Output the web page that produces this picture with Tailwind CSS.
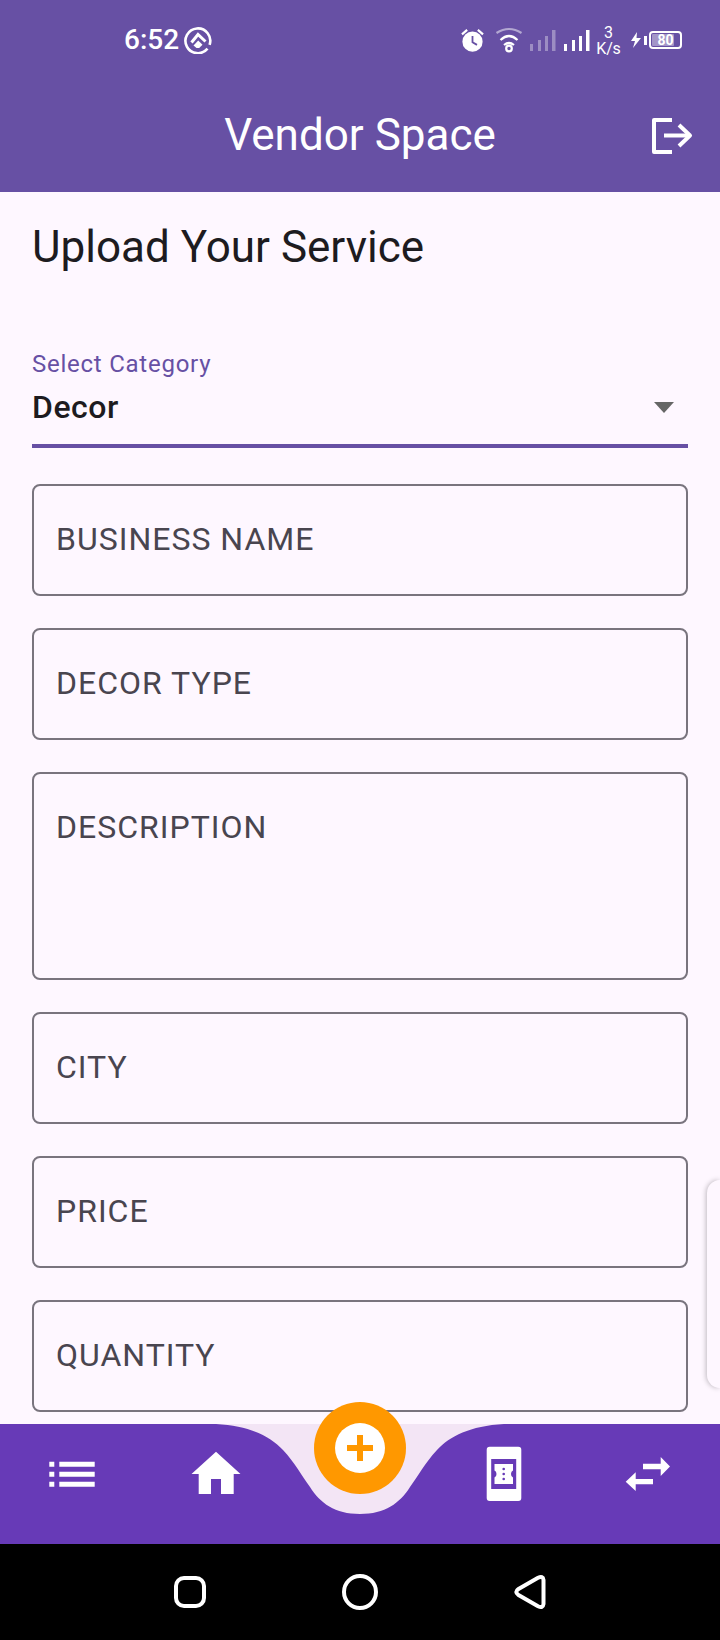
<!DOCTYPE html>
<html lang="en">
<head>
  <meta charset="UTF-8" />
  <title>Vendor Space</title>
  <meta name="viewport" content="width=device-width, initial-scale=1.0" />
  <script src="https://cdn.jsdelivr.net/npm/@tailwindcss/browser@4"></script>
</head>
<body class="font-[Roboto,sans-serif] bg-[#fef7ff]">
  <div class="w-[720px] h-[1640px] flex flex-col overflow-hidden">

    <!-- app bar with status bar -->
    <header class="h-[192px] bg-[#6750a4] text-white shrink-0">
      <div class="h-[80px] flex items-center justify-between pl-[124px] pr-[38px]">
        <div class="flex items-center">
          <span class="text-[28px] font-medium leading-none">6:52</span>
          <svg class="ml-[5px]" width="28" height="28" viewBox="0 0 28 28" fill="none" stroke="white">
            <path d="M23.5 22.6A12.4 12.4 0 1 1 25.6 18.8" stroke-width="2.6" />
            <path d="M7.5 16.5 14 8.5l7.5 7" stroke-width="3" />
            <path d="M9.5 19.5 14.2 14.5l4.3 4.2-3.3 3.3H12.5z" fill="white" stroke="none" />
          </svg>
        </div>
        <div class="flex items-center">
          <svg width="27" height="27" viewBox="0 0 24 24" fill="white">
            <path d="M22 5.72l-4.6-3.86-1.29 1.53 4.6 3.86L22 5.72zM7.88 3.39L6.6 1.86 2 5.71l1.29 1.53 4.59-3.85z" />
            <circle cx="12" cy="13" r="9" />
            <path d="M12 8v5.5l4 2.4" fill="none" stroke="#6750a4" stroke-width="1.6" />
          </svg>
          <svg class="ml-[9px]" width="28" height="28" viewBox="0 0 28 28" fill="none" stroke="white" stroke-width="2.2">
            <path d="M1.5 7Q14 -1 26.5 7" stroke-opacity="0.5" />
            <path d="M5.5 14Q14 6 22.5 14" />
            <path d="M9 19Q14 15 19 19" />
            <circle cx="14" cy="22.5" r="2.8" />
          </svg>
          <svg class="ml-[7px]" width="26" height="22" viewBox="0 0 26 22" fill="white" fill-opacity="0.35">
            <rect x="0" y="15" width="3" height="7" />
            <rect x="8" y="11" width="3" height="11" />
            <rect x="15" y="7" width="3" height="15" />
            <rect x="22" y="1" width="3.5" height="21" />
          </svg>
          <svg class="ml-[8px]" width="26" height="22" viewBox="0 0 26 22" fill="white">
            <rect x="0" y="15" width="3" height="7" />
            <rect x="8" y="11" width="3" height="11" />
            <rect x="15" y="7" width="3" height="15" />
            <rect x="22" y="1" width="3.5" height="21" />
          </svg>
          <div class="ml-[7px] w-[23px] flex flex-col items-center text-[16px] leading-[16px] mt-[2px]">
            <span>3</span>
            <span class="-tracking-[0.2px]">K/s</span>
          </div>
          <svg class="ml-[11px]" width="10" height="16" viewBox="0 0 10 16" fill="white">
            <path d="M6 0 0 9h4l-2 7 8-10H5.5z" />
          </svg>
          <div class="ml-[3px] w-[3px] h-[9px] bg-white"></div>
          <div class="ml-[2px] w-[33px] h-[18px] border-2 border-white rounded-[4px] p-[1px] relative">
            <div class="h-full w-[80%] bg-white/40 rounded-[1px]"></div>
            <span class="absolute inset-0 flex items-center justify-center text-[14px] font-bold leading-none">80</span>
          </div>
        </div>
      </div>
      <div class="grid grid-cols-[1fr_auto_1fr] items-center h-[112px]">
        <div></div>
        <h1 class="text-[44px] leading-none mb-[2px]">Vendor Space</h1>
        <div class="flex justify-end pr-[27px]">
          <svg width="41" height="36" viewBox="0 0 41 36" fill="none" stroke="white" stroke-width="4" stroke-linejoin="round">
            <path d="M20 2H2V34H20" />
            <path d="M12 17.5H38" />
            <path d="M27 7l11 10.5L27 28" />
          </svg>
        </div>
      </div>
    </header>

    <!-- form -->
    <main class="relative flex-1 overflow-hidden px-[32px] pt-[27px] text-[#1d1b20]">
      <h2 class="text-[44px] leading-[56px]">Upload Your Service</h2>

      <div class="mt-[73px] border-b-4 border-[#6750a4] pb-[17px]">
        <div class="text-[24px] leading-[32px] tracking-[0.75px] text-[#6750a4]">Select Category</div>
        <div class="flex items-center justify-between mt-[7px]">
          <span class="text-[32px] leading-[40px] font-medium tracking-[0.5px]">Decor</span>
          <svg class="mr-[14px]" width="20" height="11" viewBox="0 0 20 11" fill="#666666">
            <path d="M0 0h20L10 11z" />
          </svg>
        </div>
      </div>

      <div class="mt-[36px] flex flex-col gap-[32px]">
        <div class="h-[112px] border-2 border-[#79747e] rounded-[8px] px-[22px] pb-[2px] flex items-center text-[32px] tracking-[1px] text-[#49454f]">BUSINESS NAME</div>
        <div class="h-[112px] border-2 border-[#79747e] rounded-[8px] px-[22px] pb-[2px] flex items-center text-[32px] tracking-[1px] text-[#49454f]">DECOR TYPE</div>
        <div class="h-[208px] border-2 border-[#79747e] rounded-[8px] px-[22px] pt-[33px] text-[32px] leading-[40px] tracking-[1px] text-[#49454f]">DESCRIPTION</div>
        <div class="h-[112px] border-2 border-[#79747e] rounded-[8px] px-[22px] pb-[2px] flex items-center text-[32px] tracking-[1px] text-[#49454f]">CITY</div>
        <div class="h-[112px] border-2 border-[#79747e] rounded-[8px] px-[22px] pb-[2px] flex items-center text-[32px] tracking-[1px] text-[#49454f]">PRICE</div>
        <div class="h-[112px] border-2 border-[#79747e] rounded-[8px] px-[22px] pb-[2px] flex items-center text-[32px] tracking-[1px] text-[#49454f]">QUANTITY</div>
      </div>

      <!-- edge panel handle -->
      <div class="absolute right-0 top-[988px] w-[13px] h-[208px] bg-[#fef7ff] rounded-l-[18px] shadow-[-1px_0_5px_rgba(0,0,0,0.25)]"></div>
    </main>

    <!-- bottom nav -->
    <nav class="relative h-[120px] shrink-0 bg-[#f3e5f5]">
      <svg class="absolute inset-0" width="720" height="120" viewBox="0 0 720 120" fill="#673ab7">
        <path d="M0 0H216C250 2 270 12 283 26C295 39 302 52 310 63C320 79 335 90 360 90C385 90 400 79 410 63C418 52 425 39 437 26C450 12 470 2 504 0H720V120H0Z" />
      </svg>
      <div class="relative grid grid-cols-5 pt-[14px]">
        <div class="flex justify-center">
          <svg width="72" height="72" viewBox="0 0 72 72" fill="white">
            <path d="M13.3 23.7h5v5h-5zM23.3 23.7h35.4v5H23.3zM13.3 33.7h5v5h-5zM23.3 33.7h35.4v5H23.3zM13.3 43.7h5v5h-5zM23.3 43.7h35.4v5H23.3z" />
          </svg>
        </div>
        <div class="flex justify-center">
          <svg width="72" height="72" viewBox="0 0 72 72" fill="white">
            <path d="M36 13.7 60.5 36H53.7V56H41V41H31V56H18.7V36H11.5Z" />
          </svg>
        </div>
        <div></div>
        <div class="flex justify-center">
          <svg width="72" height="72" viewBox="0 0 72 72">
            <rect x="18.7" y="8.7" width="34.6" height="54.3" rx="3" fill="white" />
            <rect x="23.2" y="21" width="25" height="30" fill="#673ab7" />
            <path d="M26.5 26H45V32.5Q43 33 43 36T45 39.5V46H26.5V39.5Q28.5 39 28.5 36T26.5 32.5Z" fill="white" />
            <circle cx="35.7" cy="31" r="1.3" fill="#673ab7" />
            <circle cx="35.7" cy="36" r="1.3" fill="#673ab7" />
            <circle cx="35.7" cy="41" r="1.3" fill="#673ab7" />
          </svg>
        </div>
        <div class="flex justify-center">
          <svg width="72" height="72" viewBox="0 0 72 72" fill="white">
            <path d="M31 25.7H48.7V19L58 28.5 48.7 38V31.3H31Z" />
            <path d="M41 41H23.7V34.3L13.7 43.7 23.7 53V46.2H41Z" />
          </svg>
        </div>
      </div>

      <!-- add button -->
      <button class="absolute left-[314px] -top-[22px] w-[92px] h-[92px] rounded-full bg-[#ff9800] flex items-center justify-center">
        <span class="w-[50px] h-[50px] rounded-full bg-white flex items-center justify-center">
          <svg width="26" height="26" viewBox="0 0 26 26" fill="#ff9800">
            <path d="M10 0h6v10h10v6H16v10h-6V16H0v-6h10z" />
          </svg>
        </span>
      </button>
    </nav>

    <!-- system nav -->
    <div class="h-[96px] shrink-0 bg-black flex items-center justify-center">
      <div class="w-[170px] flex justify-center">
        <div class="w-[32px] h-[32px] border-4 border-white rounded-[10px]"></div>
      </div>
      <div class="w-[170px] flex justify-center">
        <div class="w-[36px] h-[36px] border-4 border-white rounded-full"></div>
      </div>
      <div class="w-[170px] flex justify-center">
        <svg width="32" height="36" viewBox="0 0 32 36" fill="none" stroke="white" stroke-width="4">
          <path d="M4.5 15 24 3.8Q29 1.5 29.5 6V30Q29 34.5 24 32.2L4.5 21Q0 18 4.5 15Z" />
        </svg>
      </div>
    </div>
  </div>
</body>
</html>
